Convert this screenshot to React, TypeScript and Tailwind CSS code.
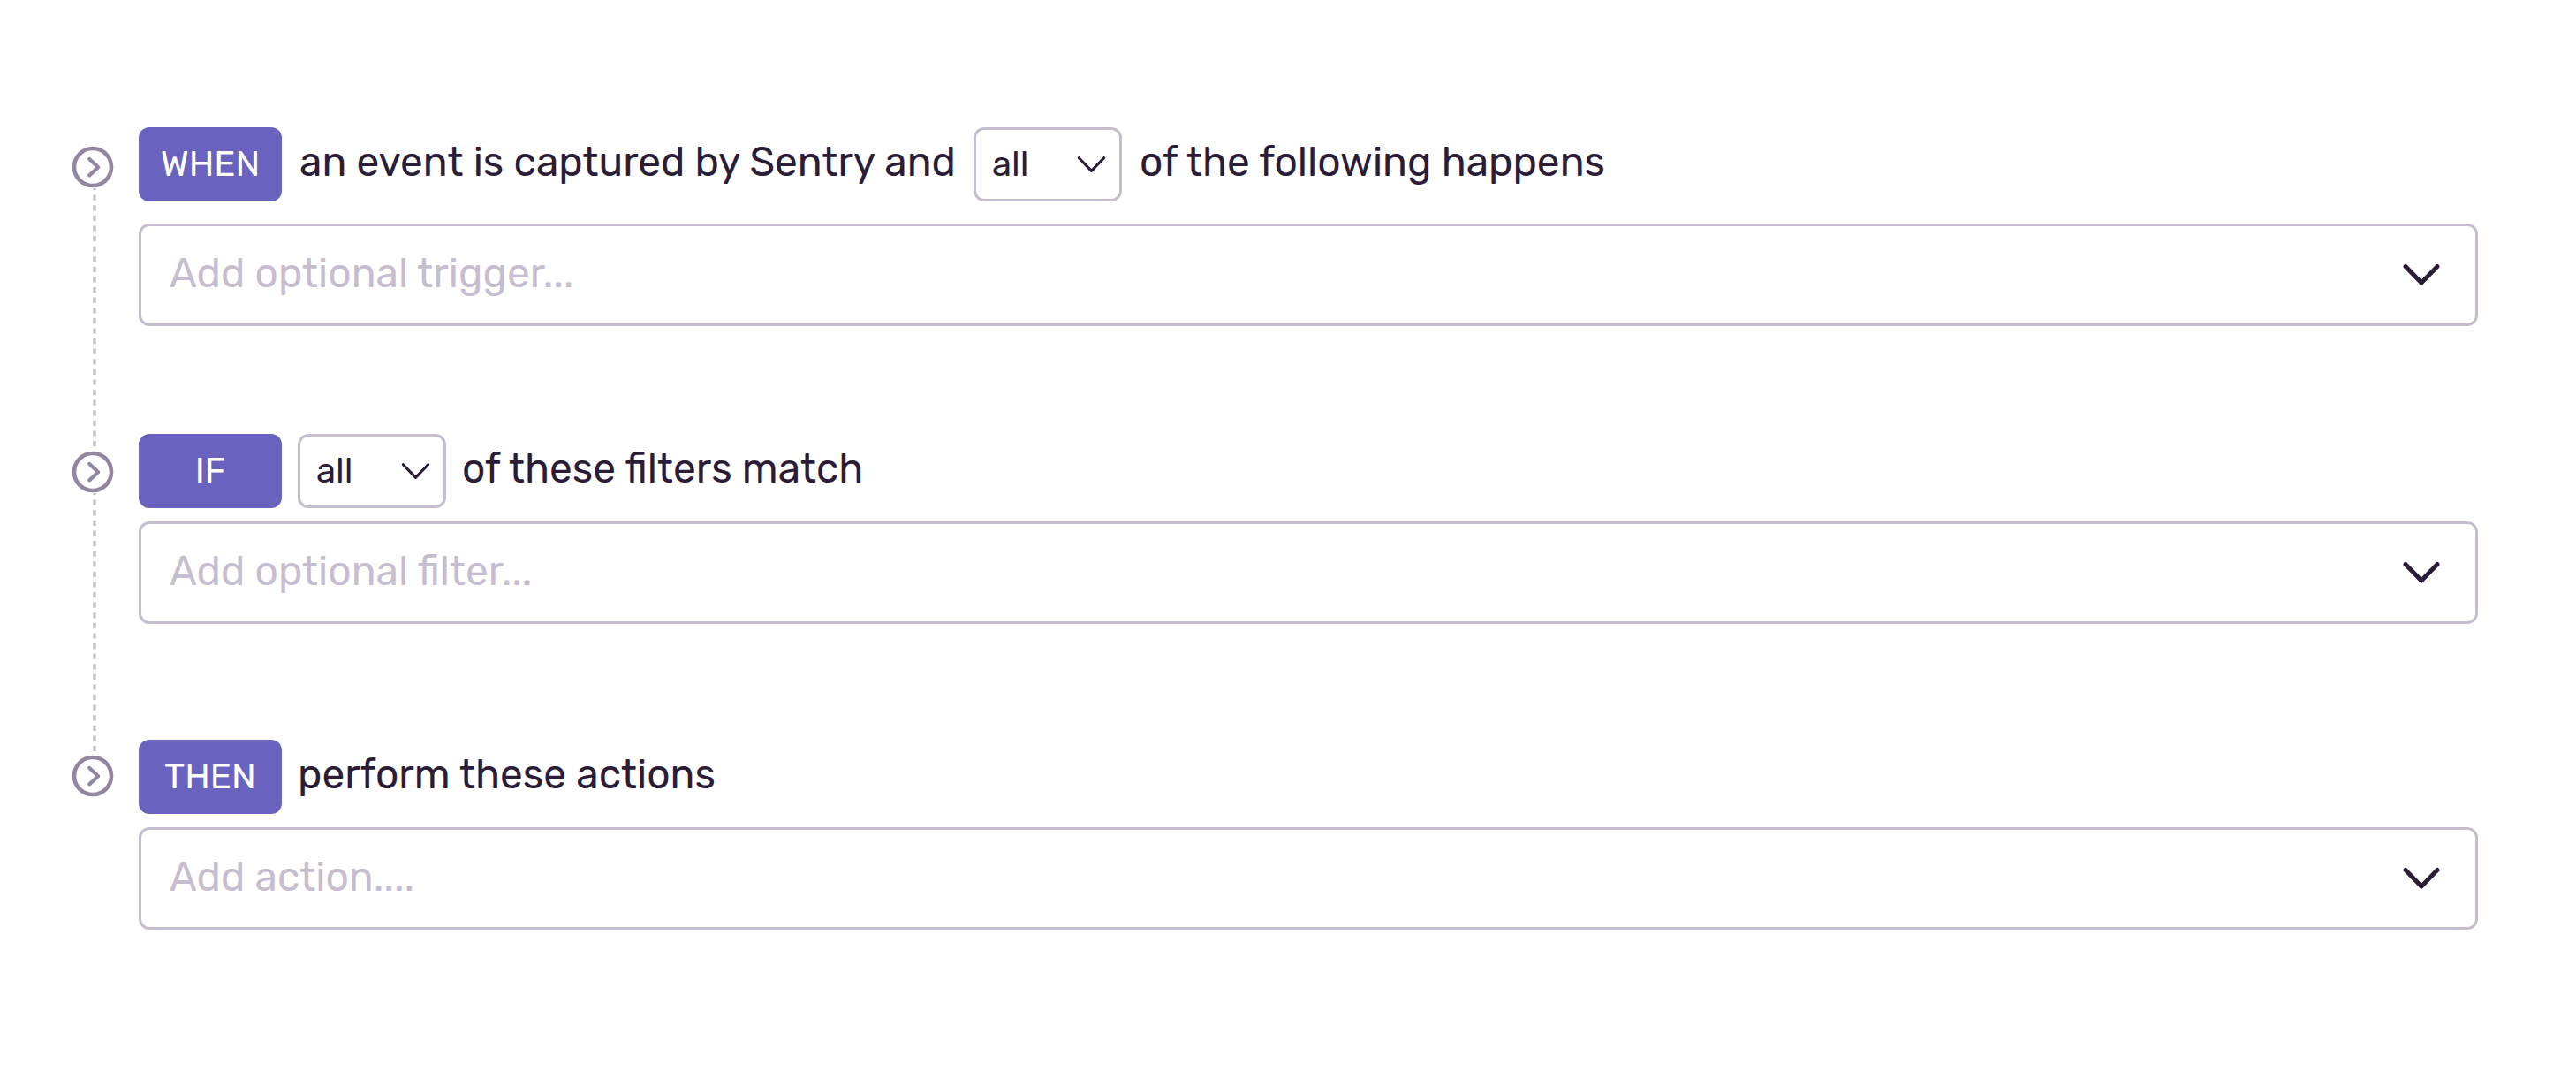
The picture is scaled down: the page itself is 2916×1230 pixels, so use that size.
import type { ReactNode } from "react";

function Chevron({ className, strokeWidth }: { className: string; strokeWidth: number }) {
  return (
    <svg
      viewBox="0 0 42 26"
      fill="none"
      stroke="currentColor"
      strokeWidth={strokeWidth}
      strokeLinecap="round"
      strokeLinejoin="round"
      aria-hidden="true"
      className={className}
    >
      <path d="M3 3.5 21 22 39 3.5" />
    </svg>
  );
}

function StepMarker() {
  return (
    <svg viewBox="0 0 48 48" fill="none" stroke="#9386a0" aria-hidden="true" className="size-12 shrink-0">
      <circle cx="24" cy="24" r="21" strokeWidth="4.6" />
      <path d="M20.2 15 30.2 24.2 20.2 33.4" strokeWidth="4.2" strokeLinecap="round" strokeLinejoin="round" />
    </svg>
  );
}

function Connector() {
  return (
    <svg aria-hidden="true" className="ml-6 min-h-0 w-1 flex-1">
      <line x1="2" y1="0" x2="2" y2="100%" stroke="#c6becf" strokeWidth="3.4" strokeDasharray="6.2 5.4" strokeDashoffset="4" />
    </svg>
  );
}

function Badge({ children }: { children: ReactNode }) {
  return (
    <span className="flex h-[84px] w-[162px] shrink-0 items-center justify-center rounded-xl bg-[#6a62bf] text-[40px] leading-none text-white">
      {children}
    </span>
  );
}

function MatchSelect({ label }: { label: string }) {
  return (
    <span className="relative inline-block h-[84px] w-[168px] shrink-0">
      <select
        aria-label={label}
        className="h-full w-full appearance-none rounded-xl border-[3px] border-[#c6becf] bg-white pl-[18px] text-[40px] leading-tight text-[#2b1d38]"
      >
        <option>all</option>
        <option>any</option>
        <option>none</option>
      </select>
      <Chevron strokeWidth={4} className="pointer-events-none absolute top-[32px] right-[18px] w-[33px] text-[#2b1d38]" />
    </span>
  );
}

function AddSelect({ placeholder, option }: { placeholder: string; option: string }) {
  return (
    <div className="relative h-[116px]">
      <select
        aria-label={placeholder}
        defaultValue=""
        className="h-full w-full appearance-none rounded-xl border-[3px] border-[#c6becf] bg-white pb-0.5 pl-8 text-[46px] leading-tight text-[#c6becf]"
      >
        <option value="" disabled>
          {placeholder}
        </option>
        <option value="1">{option}</option>
      </select>
      <Chevron strokeWidth={5} className="pointer-events-none absolute top-[45px] right-[43px] w-[42px] text-[#2b1d38]" />
    </div>
  );
}

export default function App() {
  return (
    <main className="flex gap-7 bg-white pt-36 pr-[111px] pb-44 pl-[81px] font-[Rubik,Roboto,sans-serif] text-[46px] leading-none text-[#2b1d38]">
      <div className="flex w-12 shrink-0 flex-col pt-[21px] pb-[150px]">
        <StepMarker />
        <Connector />
        <StepMarker />
        <Connector />
        <StepMarker />
      </div>

      <div className="min-w-0 flex-1">
        <section className="mb-[122px] flex flex-col gap-[25px]">
          <div className="flex items-baseline gap-5">
            <Badge>WHEN</Badge>
            <span>an event is captured by Sentry and</span>
            <MatchSelect label="Trigger match" />
            <span>of the following happens</span>
          </div>
          <AddSelect placeholder="Add optional trigger..." option="A new issue is created" />
        </section>

        <section className="mb-[131px] flex flex-col gap-[15px]">
          <div className="flex items-baseline gap-[18px]">
            <Badge>IF</Badge>
            <MatchSelect label="Filter match" />
            <span>of these filters match</span>
          </div>
          <AddSelect placeholder="Add optional filter..." option="The issue is older than" />
        </section>

        <section className="flex flex-col gap-[15px]">
          <div className="flex items-baseline gap-[18px]">
            <Badge>THEN</Badge>
            <span>perform these actions</span>
          </div>
          <AddSelect placeholder="Add action...." option="Send a notification" />
        </section>
      </div>
    </main>
  );
}
